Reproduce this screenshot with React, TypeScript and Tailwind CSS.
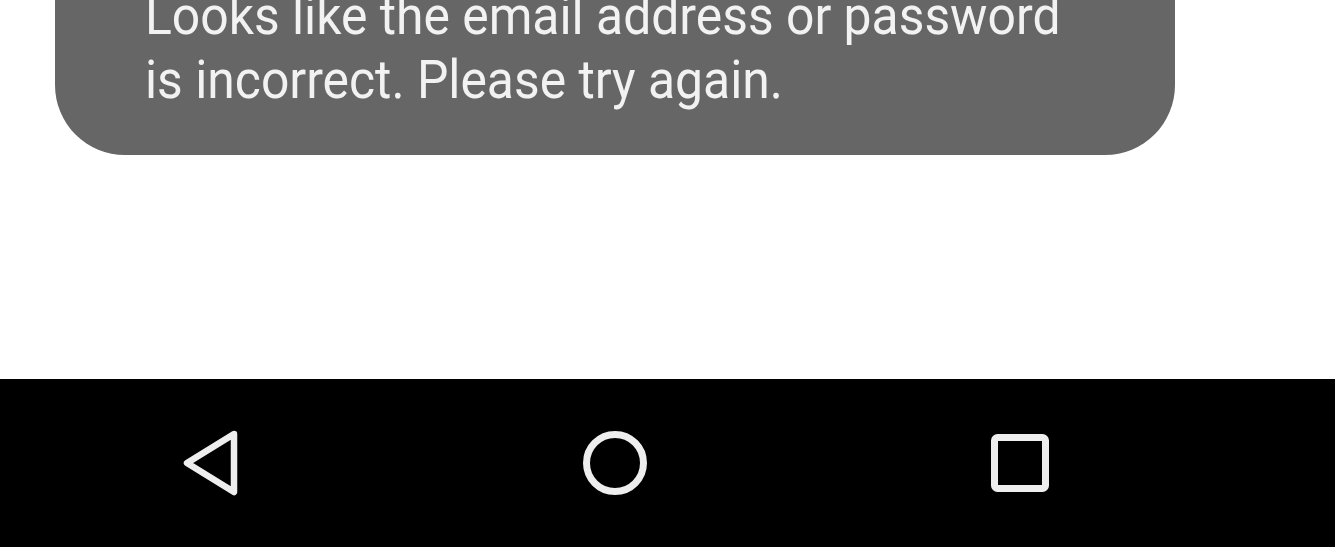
import React from "react";

export default function App() {
  return (
    <div className="flex h-[547px] w-[1335px] flex-col overflow-hidden bg-white">
      <div className="flex-1">
        <div className="ml-[55px] mt-[-56px] w-[1120px] rounded-b-[70px] bg-[#666666] pb-[43px] pl-[90px] pt-[40px]">
          <p
            className="origin-left scale-x-[0.94] text-[53px] leading-[64px] text-[#f2f2f2]"
            style={{ fontFamily: "Roboto, 'Noto Sans', sans-serif" }}
          >
            Looks like the email address or password
            <br />
            is incorrect. Please try again.
          </p>
        </div>
      </div>
      <div className="flex h-[168px] items-center bg-black">
        <div className="flex w-full items-center">
          <div className="flex w-[424px] justify-center">
            <svg width="60" height="66" viewBox="0 0 60 66">
              <path d="M52 4 L5 33 L52 62 Z" fill="none" stroke="#eeeeee" strokeWidth="6.5" strokeLinejoin="round" />
            </svg>
          </div>
          <div className="flex w-[382px] justify-center">
            <svg width="66" height="66" viewBox="0 0 66 66">
              <circle cx="33" cy="33" r="28.5" fill="none" stroke="#eeeeee" strokeWidth="7" />
            </svg>
          </div>
          <div className="flex w-[428px] justify-center">
            <svg width="60" height="60" viewBox="0 0 60 60">
              <rect x="4.5" y="4.5" width="51" height="51" rx="3" fill="none" stroke="#eeeeee" strokeWidth="7" />
            </svg>
          </div>
        </div>
      </div>
    </div>
  );
}
